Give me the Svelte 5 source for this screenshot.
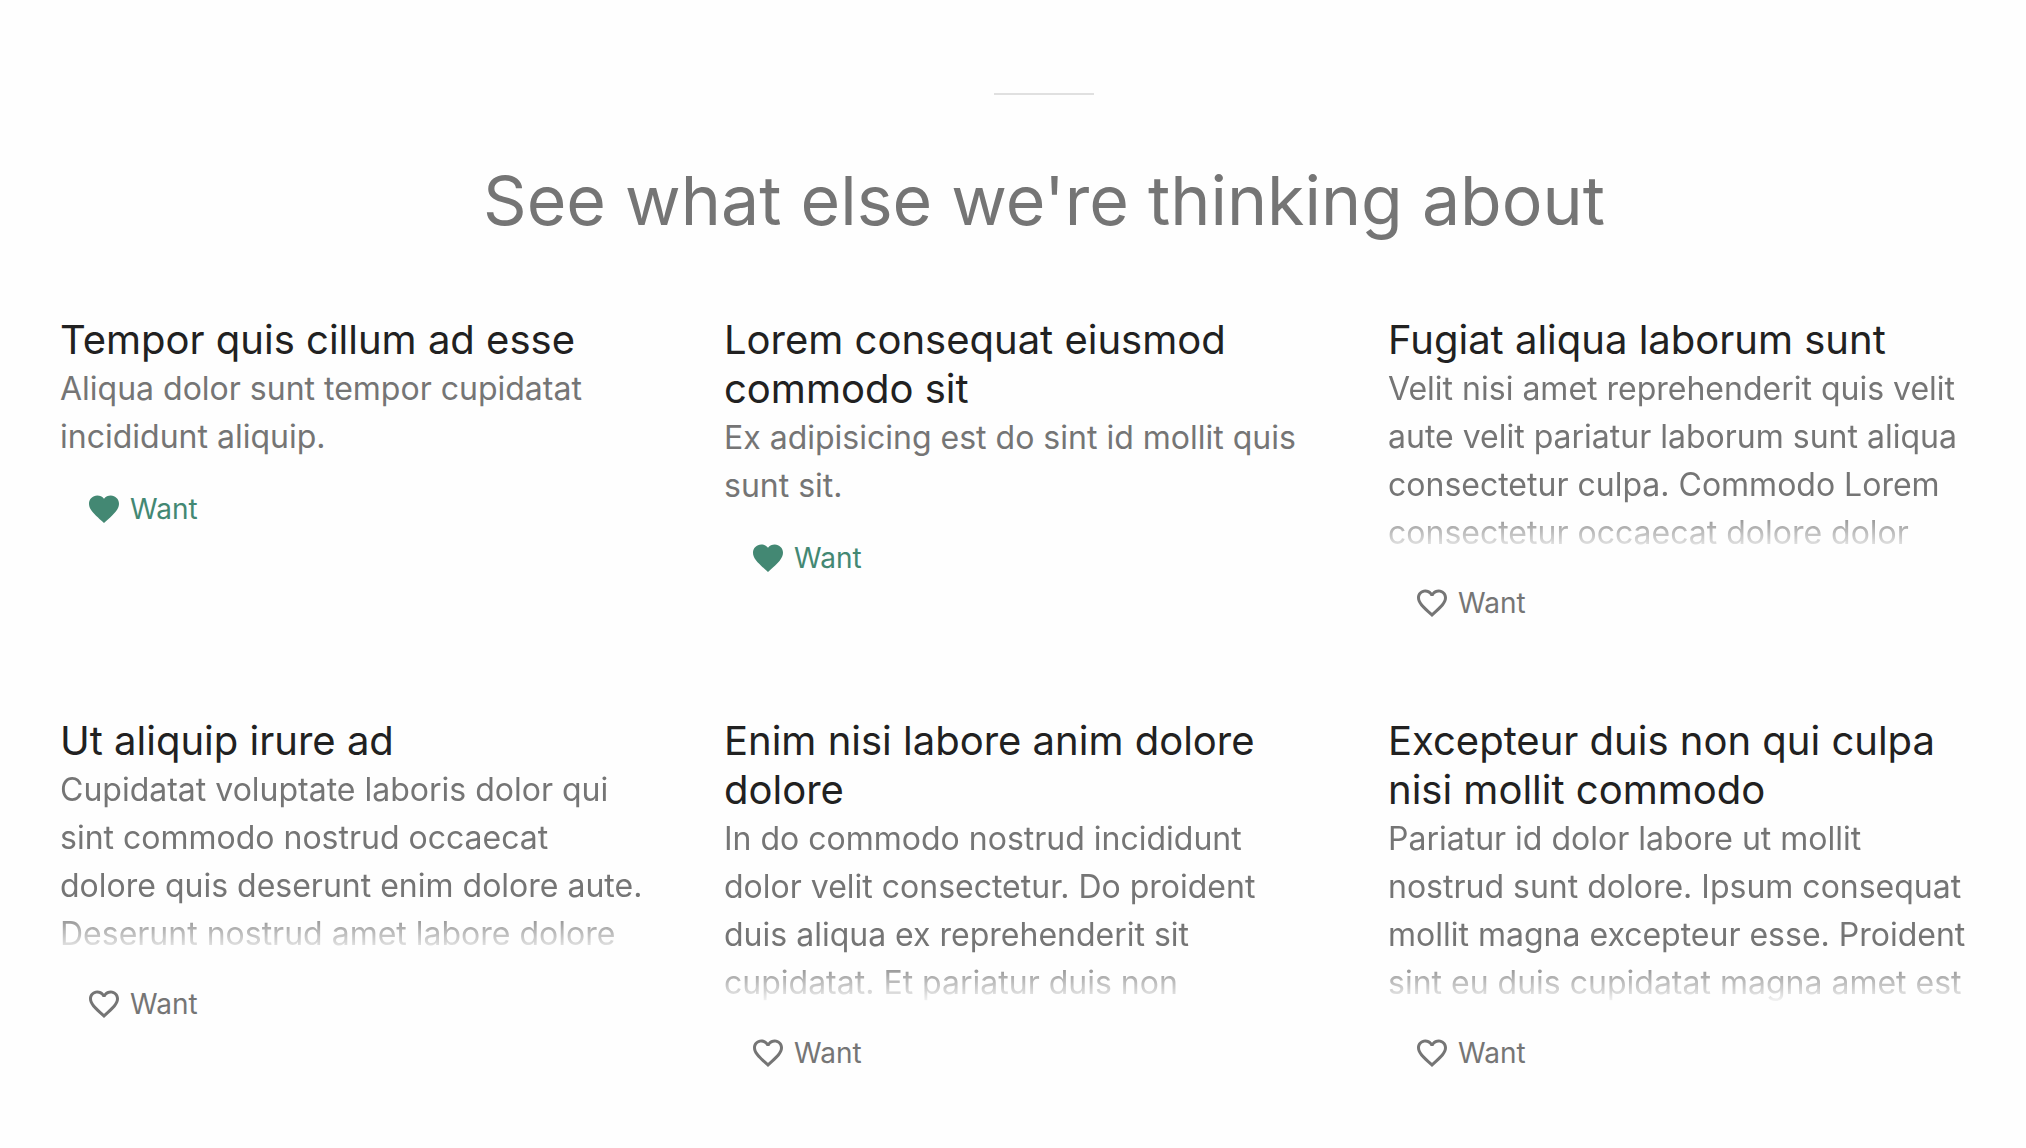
<script>
  let ideas = $state([
    { title: 'Tempor quis cillum ad esse', body: 'Aliqua dolor sunt tempor cupidatat incididunt aliquip.', wanted: true },
    { title: 'Lorem consequat eiusmod commodo sit', body: 'Ex adipisicing est do sint id mollit quis sunt sit.', wanted: true },
    {
      title: 'Fugiat aliqua laborum sunt',
      body: 'Velit nisi amet reprehenderit quis velit aute velit pariatur laborum sunt aliqua consectetur culpa. Commodo Lorem consectetur occaecat dolore dolor',
      long: true,
      wanted: false
    },
    {
      title: 'Ut aliquip irure ad',
      body: 'Cupidatat voluptate laboris dolor qui sint commodo nostrud occaecat dolore quis deserunt enim dolore aute. Deserunt nostrud amet labore dolore',
      long: true,
      wanted: false
    },
    {
      title: 'Enim nisi labore anim dolore dolore',
      body: 'In do commodo nostrud incididunt dolor velit consectetur. Do proident duis aliqua ex reprehenderit sit cupidatat. Et pariatur duis non',
      long: true,
      wanted: false
    },
    {
      title: 'Excepteur duis non qui culpa nisi mollit commodo',
      body: 'Pariatur id dolor labore ut mollit nostrud sunt dolore. Ipsum consequat mollit magna excepteur esse. Proident sint eu duis cupidatat magna amet est',
      long: true,
      wanted: false
    }
  ]);
</script>

<main class="page">
  <section class="ideas">
    <hr class="rule" />
    <h2 class="heading">See what else we're thinking about</h2>
    <div class="grid">
      {#each ideas as idea}
        <article class="card">
          <h3 class="title">{idea.title}</h3>
          <p class="body" class:long={idea.long}>{idea.body}</p>
          <button
            type="button"
            class="want"
            class:wanted={idea.wanted}
            aria-pressed={idea.wanted}
            onclick={() => (idea.wanted = !idea.wanted)}
          >
            <svg class="icon" viewBox="0 0 24 24" aria-hidden="true">
              {#if idea.wanted}
                <path d="M12 21.35l-1.45-1.32C5.4 15.36 2 12.28 2 8.5 2 5.42 4.42 3 7.5 3c1.74 0 3.41.81 4.5 2.09C13.09 3.81 14.76 3 16.5 3 19.58 3 22 5.42 22 8.5c0 3.78-3.4 6.86-8.55 11.54L12 21.35z" />
              {:else}
                <path d="M16.5 3c-1.74 0-3.41.81-4.5 2.09C10.91 3.81 9.24 3 7.5 3 4.42 3 2 5.42 2 8.5c0 3.78 3.4 6.86 8.55 11.54L12 21.35l1.45-1.32C18.6 15.36 22 12.28 22 8.5 22 5.42 19.58 3 16.5 3zm-4.4 15.55l-.1.1-.1-.1C7.14 14.24 4 11.39 4 8.5 4 6.5 5.5 5 7.5 5c1.54 0 3.04.99 3.57 2.36h1.87C13.46 5.99 14.96 5 16.5 5c2 0 3.5 1.5 3.5 3.5 0 2.89-3.14 5.74-7.9 10.05z" />
              {/if}
            </svg>
            Want
          </button>
        </article>
      {/each}
    </div>
  </section>
</main>

<style>
  :global(body) {
    margin: 0;
    background: #fefefe;
  }
  .page {
    overflow: hidden;
    font-family: Inter, sans-serif;
    color: #757575;
  }
  .ideas {
    margin: 0 -14px 0 48px;
    padding: 93px 0 48px;
  }
  .rule {
    width: 100px;
    height: 2px;
    margin: 0 auto;
    border: 0;
    background: #e0e0e0;
  }
  .heading {
    margin: 63px 0 73px;
    font-size: 68px;
    font-weight: 400;
    line-height: 84px;
    text-align: center;
  }
  .grid {
    display: grid;
    grid-template-columns: repeat(3, 1fr);
    row-gap: 81px;
  }
  .card {
    padding: 0 64px 0 12px;
  }
  .title {
    margin: 0 0 1px;
    font-size: 40px;
    font-weight: 400;
    line-height: 49px;
    color: #212121;
  }
  .body {
    margin: 0;
    font-size: 32px;
    line-height: 48px;
  }
  .long {
    max-height: 190px;
    overflow: hidden;
    mask-image: linear-gradient(to top, transparent, #000 48px);
  }
  .want {
    display: flex;
    align-items: center;
    gap: 8px;
    height: 64px;
    margin: 16px 0 0;
    padding: 0 26px;
    border: 0;
    background: none;
    font: inherit;
    font-size: 28px;
    color: inherit;
    cursor: pointer;
  }
  .wanted {
    color: #438873;
  }
  .icon {
    width: 36px;
    height: 36px;
    fill: currentColor;
  }
</style>
